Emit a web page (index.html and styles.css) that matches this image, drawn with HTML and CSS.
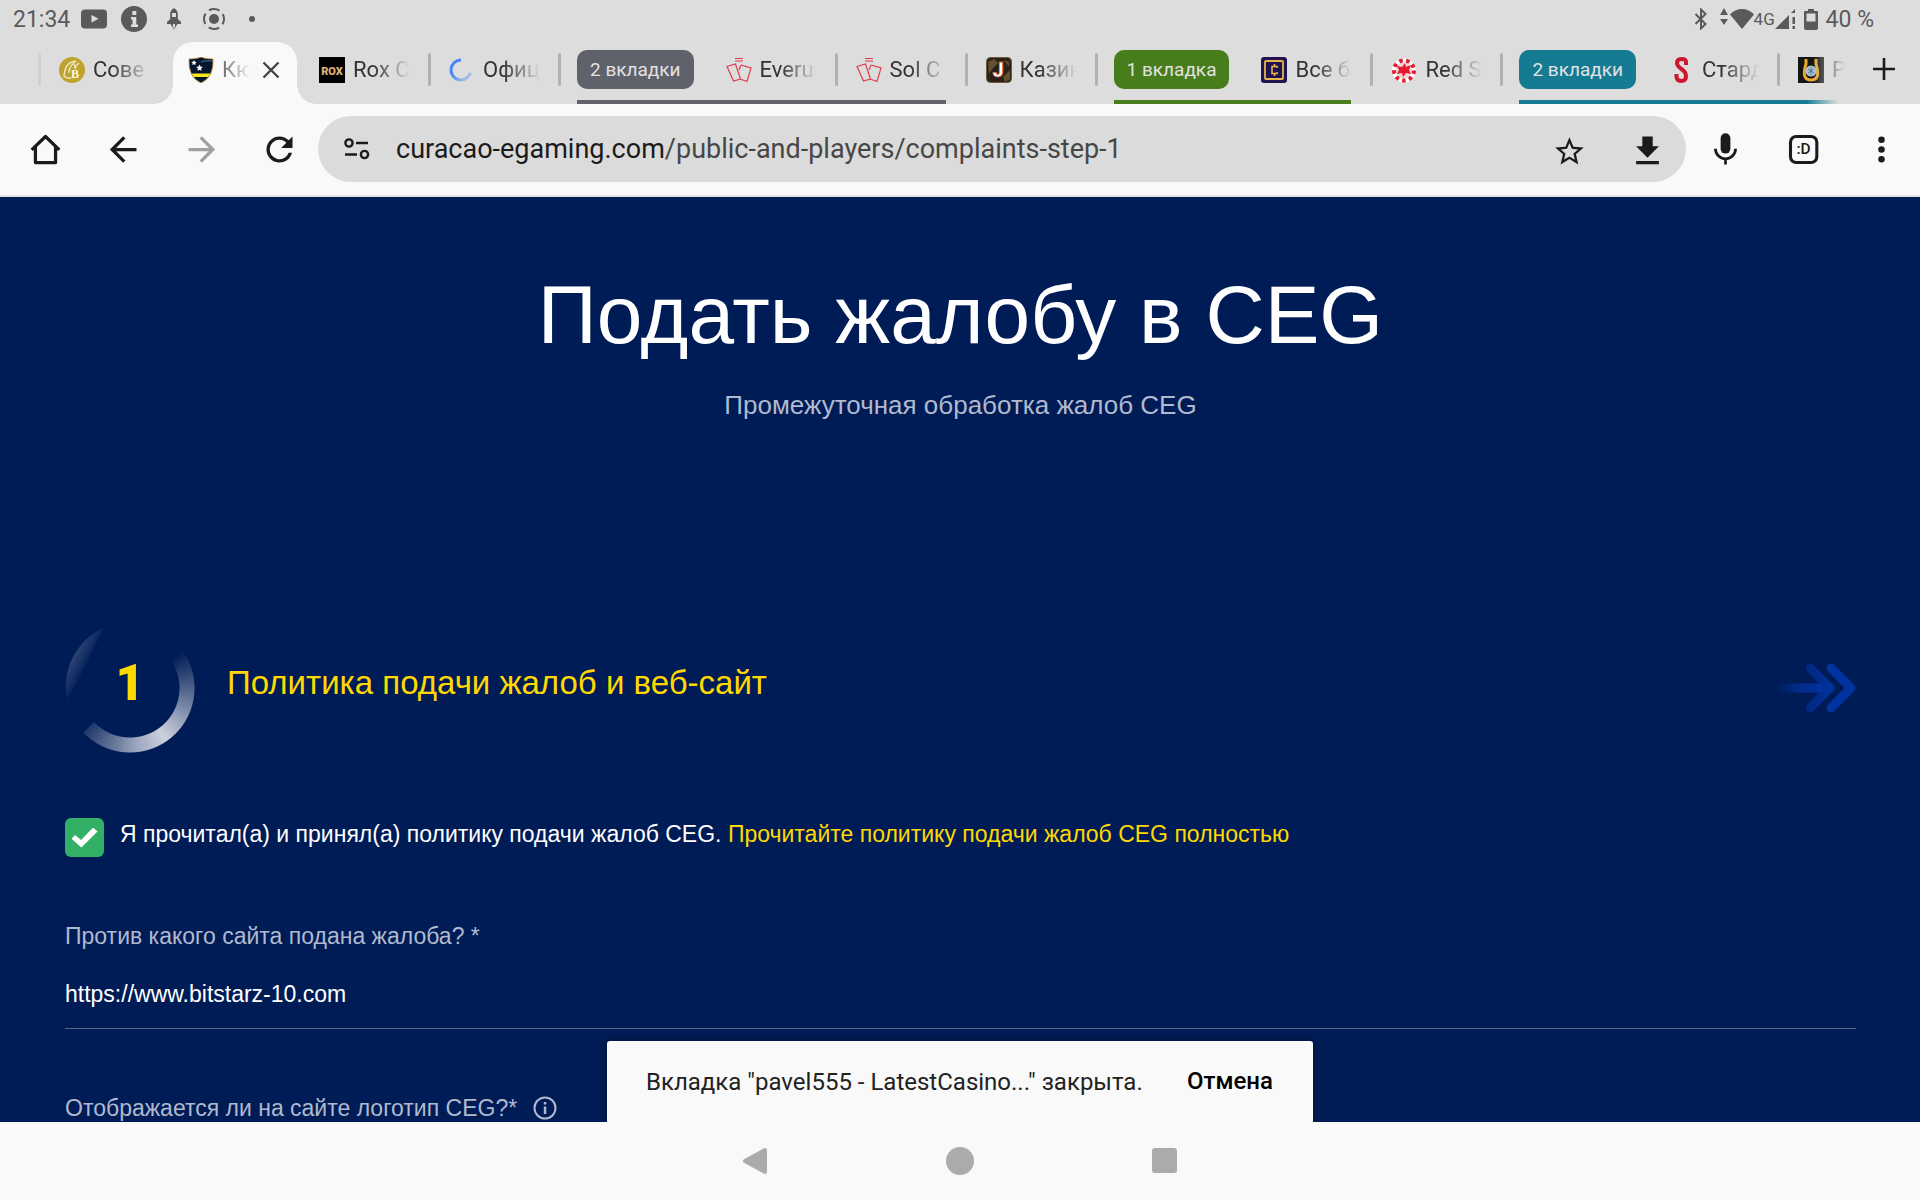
FILE: index.html
```html
<!DOCTYPE html>
<html lang="ru">
<head>
<meta charset="utf-8">
<meta name="viewport" content="width=device-width, initial-scale=1">
<title>Подать жалобу в CEG</title>
<link rel="stylesheet" href="styles.css">
</head>
<body>
<header class="status">
  <div class="status-left">
    <time class="clock">21:34</time>
    <svg class="s-youtube" width="26" height="20" viewBox="0 0 26 20"><rect width="26" height="19" y="0.5" rx="4" fill="#5a5a5a"/><path d="M10.500 6v7.500l7-3.750z" fill="#ddd"/></svg>
    <svg class="s-info" width="26" height="26" viewBox="0 0 26 26"><circle cx="13" cy="13" r="13" fill="#5a5a5a"/><path d="M11.300 5h4v4h-4zM10 11h5.300v7.500H17V21h-7v-2.500h1.500v-5H10z" fill="#ddd"/></svg>
    <svg class="s-rocket" width="14" height="22" viewBox="0 0 14 22"><path fill-rule="evenodd" d="M7 0c3 2 3.800 4 3.800 6v5l3.200 3v2h-3.500l-3.500 5.500L3.500 16H0v-2l3.200-3V6c0-2 .8-4 3.800-6zM5 5v4h4V5zM6 16v3l1 1.500L8 19v-3z" fill="#5a5a5a"/></svg>
    <svg class="s-record" width="24" height="24" viewBox="0 0 24 24"><circle cx="12" cy="12" r="5" fill="#5a5a5a"/><circle cx="12" cy="12" r="10" fill="none" stroke="#5a5a5a" stroke-width="2" stroke-dasharray="11 4.700" stroke-dashoffset="5.500"/></svg>
    <svg width="6" height="6" viewBox="0 0 6 6"><circle cx="3" cy="3" r="3" fill="#5a5a5a"/></svg>
  </div>
  <div class="status-right">
    <svg class="s-bt" width="14" height="22" viewBox="0 0 14 22"><path d="M1.500 6l10 10L7 20.500v-19L11.500 6l-10 10" fill="none" stroke="#5a5a5a" stroke-width="2"/></svg>
    <svg class="s-data" width="8" height="18" viewBox="0 0 8 18"><path d="M4 0l4 7H0zM4 17l4-6H0z" fill="#5a5a5a"/></svg>
    <svg width="24" height="20" viewBox="0 0 24 20"><path d="M12 20L0 5.500Q5 0 12 0t12 5.500z" fill="#5a5a5a"/></svg>
    <span class="net">4G</span>
    <svg class="s-signal" width="20" height="20" viewBox="0 0 20 20"><path d="M0 20L14 6v14zM16 4l4-4v4zM17.500 8h2.500v7h-2.500zM17.500 17h2.500v3h-2.500z" fill="#5a5a5a"/></svg>
    <svg class="s-battery" width="14" height="22" viewBox="0 0 14 22"><path fill-rule="evenodd" d="M4 1h6v2h3q1 0 1 1v16q0 2-2 2H2q-2 0-2-2V4q0-1 1-1h3zM2.500 5.500v8h9v-8z" fill="#5a5a5a"/></svg>
    <span class="clock">40 %</span>
  </div>
</header>

<nav class="tabs" aria-label="Вкладки">
  <button class="tab tab-first">
    <svg class="fav" viewBox="0 0 26 26"><circle cx="13" cy="13" r="13" fill="#bfa32f"/><path d="M17 4Q6 5 5 19q3 3 7 2M17 4q-7 5-7 12M15 7l2 5M20 6l-5 5" fill="none" stroke="#efe5bb" stroke-width="1.500"/><text x="12" y="21" font-family="Liberation Serif, serif" font-size="12" font-weight="700" fill="#fff8dd">B</text></svg>
    <span class="tab-title">Сове</span>
  </button>
  <div class="tab tab-active">
    <svg class="fav" viewBox="0 0 26 26"><clipPath id="shield"><path d="M1 2q8 0 12-2 4 2 12 2 1 18-12 24Q0 20 1 2z"/></clipPath><g clip-path="url(#shield)"><rect width="26" height="26" fill="#07162f"/><path d="M0 16.500h26v3.500H0z" fill="#f6e61c"/><path d="M13 5q5-2 12-1" stroke="#34527e" stroke-width="1.500" fill="none"/></g><path d="M1 2q8 0 12-2 4 2 12 2 1 18-12 24Q0 20 1 2z" fill="none" stroke="#b58a2c" stroke-width=".8"/><path d="M6 3l.8 1.700 1.900.2-1.400 1.300.4 1.900L6 7.200l-1.700.9.400-1.900-1.400-1.300 1.900-.2zM11.500 7.500l1 2.100 2.300.3-1.700 1.600.4 2.300-2-1.100-2 1.100.4-2.300-1.700-1.600 2.300-.3z" fill="#fff"/></svg>
    <span class="tab-title">Кюр</span>
    <button class="close" aria-label="Закрыть вкладку"><svg width="18" height="18" viewBox="0 0 18 18"><path d="M1.500 1.500l15 15M16.500 1.500l-15 15" stroke="#444" stroke-width="2.400"/></svg></button>
  </div>
  <button class="tab tab-plain">
    <svg class="fav" viewBox="0 0 26 26"><rect width="26" height="26" fill="#000"/><text x="13" y="18" text-anchor="middle" font-family="Roboto, sans-serif" font-size="11" font-weight="900" fill="#dcb078">ROX</text></svg>
    <span class="tab-title">Rox C</span>
  </button>
  <button class="tab">
    <svg class="fav" viewBox="0 0 26 26"><defs><linearGradient id="spin" x1="0" y1="0" x2="1" y2="1"><stop offset=".4" stop-color="#4a86f5"/><stop offset="1" stop-color="#4a86f5" stop-opacity=".2"/></linearGradient></defs><path d="M12 3A10 10 0 1 0 21.500 16" fill="none" stroke="url(#spin)" stroke-width="3"/></svg>
    <span class="tab-title">Офиц</span>
  </button>
  <div class="group group-grey">
    <div class="group-head"><button class="chip">2 вкладки</button></div>
    <button class="tab tab-plain">
      <svg class="fav" viewBox="0 0 26 26"><g id="cards" fill="none" stroke="#e2394f" stroke-width="1.200"><path d="M9 1.500h8M9 4h8M1 9.500l8.500-2.500 5 15-7 2zM15 8l10 3-4 13.500-7-2.500M15 8l-2 5"/></g></svg>
      <span class="tab-title">Everu</span>
    </button>
    <button class="tab">
      <svg class="fav" viewBox="0 0 26 26"><use href="#cards"/></svg>
      <span class="tab-title">Sol C</span>
    </button>
  </div>
  <button class="tab">
    <svg class="fav" viewBox="0 0 26 26"><rect x=".5" y=".5" width="25" height="25" rx="4" fill="#2c2118" stroke="#6f5838"/><path d="M2 5l6-3 4 4-5 5-4 6zM17 20l7-7v9l-5 3zM18 3l5 2v5z" fill="#65512e"/><text x="12" y="20" text-anchor="middle" font-family="Roboto, sans-serif" font-size="20" font-weight="900" fill="#fff" stroke="#d4552a" stroke-width=".8">J</text></svg>
    <span class="tab-title">Казин</span>
  </button>
  <div class="group group-green">
    <div class="group-head"><button class="chip">1 вкладка</button></div>
    <button class="tab tab-plain">
      <svg class="fav" viewBox="0 0 26 26"><rect width="26" height="26" rx="3" fill="#1f1350"/><rect x="4" y="4" width="18" height="18" rx="1" fill="none" stroke="#e8b64c" stroke-width="1.800"/><path d="M16 11V9.500h-5v7h5V15M13.500 7v2.500M13.500 16.500V19" fill="none" stroke="#e8b64c" stroke-width="1.600"/></svg>
      <span class="tab-title">Все б</span>
    </button>
  </div>
  <button class="tab">
    <svg class="fav" viewBox="0 0 26 26"><circle cx="13" cy="13.500" r="10" fill="none" stroke="#fff" stroke-width="4"/><circle cx="13" cy="13.500" r="10" fill="none" stroke="#e41b2c" stroke-width="4" stroke-dasharray="3.500 3.500"/><circle cx="13" cy="13.500" r="7.500" fill="#f3d3d5"/><path d="M14 6l1 4 5-2-2 5 2 4-5-1-3 4-1-4-5 1 2-4-2-4 5 1z" fill="#e41b2c"/></svg>
    <span class="tab-title">Red S</span>
  </button>
  <div class="group group-teal">
    <div class="group-head"><button class="chip">2 вкладки</button></div>
    <button class="tab tab-plain">
      <svg class="fav" viewBox="0 0 26 26"><path d="M18 8V5q0-3-4.500-3T9 6q0 3 4.500 6T18 19q0 5-4.500 5T8.500 20v-3" fill="none" stroke="#cf1630" stroke-width="4"/></svg>
      <span class="tab-title">Стард</span>
    </button>
    <button class="tab tab-last">
      <svg class="fav" viewBox="0 0 26 26"><rect width="26" height="26" fill="#151515"/><path d="M8 2v5q-5 16 5 16t5-16V2" fill="none" stroke="#e9aa2d" stroke-width="3"/><circle cx="13" cy="14" r="5.500" fill="#a9c0d2"/><path d="M10 12l6 4M16 12l-6 4M13 10v8" stroke="#547a98"/></svg>
      <span class="tab-title">Pl</span>
    </button>
  </div>
  <button class="new-tab" aria-label="Новая вкладка"><svg width="24" height="24" viewBox="0 0 24 24"><path d="M12 1v22M1 12h22" stroke="#1b1b1b" stroke-width="2.600"/></svg></button>
</nav>

<div class="toolbar">
  <button class="tool" aria-label="Домой"><svg class="icon" viewBox="0 0 24 24"><path d="M3.500 12.200L12 4l8.500 8.200M5.800 10.500V20h12.400v-9.500" fill="none" stroke="#1b1b1b" stroke-width="2" stroke-linejoin="round"/></svg></button>
  <button class="tool" aria-label="Назад"><svg class="icon" viewBox="0 0 24 24"><path d="M20 12H5M12.500 4.500L5 12l7.500 7.500" fill="none" stroke="#1b1b1b" stroke-width="2"/></svg></button>
  <button class="tool" aria-label="Вперёд"><svg class="icon" viewBox="0 0 24 24"><path d="M4 12h15M11.500 4.500L19 12l-7.500 7.500" fill="none" stroke="#a0a0a0" stroke-width="2"/></svg></button>
  <button class="tool" aria-label="Обновить"><svg class="icon" viewBox="0 0 24 24"><path d="M17.650 6.350A7.960 7.960 0 0 0 12 4a8 8 0 1 0 7.730 10h-2.080A6 6 0 1 1 12 6c1.660 0 3.140.69 4.220 1.780L13 11h7V4z" fill="#1b1b1b"/></svg></button>
  <div class="omnibox">
    <button class="site" aria-label="Сведения о сайте"><svg width="26" height="22" viewBox="0 0 26 22"><g fill="none" stroke="#1b1b1b" stroke-width="2.400"><circle cx="5" cy="5" r="3.600"/><circle cx="20.500" cy="16.500" r="3.600"/><path d="M12 5h12M1 16.500h12"/></g></svg></button>
    <div class="url"><span class="host">curacao-egaming.com</span>/public-and-players/complaints-step-1</div>
    <button class="tool" aria-label="В закладки"><svg class="icon" viewBox="0 0 24 24"><path d="M22 10.240l-7.190-.62L12 3 9.190 9.630 2 10.240l5.460 4.730L5.820 22 12 18.270 18.180 22l-1.630-7.030zM12 16.400l-3.760 2.270 1-4.280-3.320-2.880 4.380-.38L12 7.100l1.710 4.040 4.380.38-3.320 2.880 1 4.280z" fill="#1b1b1b" transform="translate(1.400 1.800) scale(.88)"/></svg></button>
    <button class="tool" aria-label="Скачать"><svg class="icon" viewBox="0 0 24 24"><path d="M19 10h-3.800V4H8.800v6H5l7 7zM5 19v2h14v-2z" fill="#1b1b1b"/></svg></button>
  </div>
  <button class="tool" aria-label="Голосовой поиск"><svg class="icon" viewBox="0 0 24 24"><rect x="9" y="2" width="6" height="12.500" rx="3" fill="#1b1b1b"/><path d="M5.800 11.500a6.200 6.200 0 0 0 12.400 0M12 17.500V21.300" fill="none" stroke="#1b1b1b" stroke-width="1.700"/></svg></button>
  <button class="tool" aria-label="Переключить вкладки"><svg class="icon" viewBox="0 0 24 24"><rect x="4" y="4" width="16.200" height="16" rx="3.500" fill="none" stroke="#1b1b1b" stroke-width="1.900"/><text x="12" y="14.500" text-anchor="middle" font-family="Roboto, sans-serif" font-size="9.500" font-weight="500" fill="#1b1b1b">:D</text></svg></button>
  <button class="tool" aria-label="Меню"><svg class="icon" viewBox="0 0 24 24"><g fill="#1b1b1b"><circle cx="12" cy="6" r="2"/><circle cx="12" cy="12" r="2"/><circle cx="12" cy="18" r="2"/></g></svg></button>
</div>

<main class="page">
  <h1 class="title">Подать жалобу в CEG</h1>
  <p class="subtitle">Промежуточная обработка жалоб CEG</p>
  <form class="form">
    <div class="step">
      <div class="ring">
        <svg class="ring-art" viewBox="0 0 130 130">
          <defs>
            <linearGradient id="crescent" gradientUnits="userSpaceOnUse" x1="8" y1="28" x2="27" y2="38"><stop offset="0" stop-color="#fff" stop-opacity=".2"/><stop offset="1" stop-color="#fff" stop-opacity="0"/></linearGradient>
          </defs>
          <path d="M38 5A65 65 0 0 0 2 76Q18 50 38 5z" fill="url(#crescent)"/>
        </svg>
        <span class="ring-num">1</span>
      </div>
      <h2 class="step-title">Политика подачи жалоб и веб-сайт</h2>
      <svg class="step-arrow" width="80" height="50" viewBox="0 0 80 50"><defs><linearGradient id="arr" gradientUnits="userSpaceOnUse" x1="0" y1="0" x2="58" y2="0"><stop offset="0" stop-color="#0032a0" stop-opacity="0"/><stop offset="1" stop-color="#0032a0"/></linearGradient></defs><g fill="none" stroke-width="9" stroke-linecap="round" stroke-linejoin="round"><path d="M0 25h50" stroke="url(#arr)" stroke-linecap="butt"/><path d="M0 20.500h46v9H0z" stroke="none" fill="url(#arr)"/><path d="M34 5l20 20-20 20" stroke="url(#arr)"/><path d="M55 5l20 20-20 20" stroke="#0032a0"/></g></svg>
    </div>
    <div class="agree">
      <input class="agree-box" type="checkbox" id="agree" checked>
      <p class="agree-text"><label for="agree">Я прочитал(а) и принял(а) политику подачи жалоб CEG.</label> <a class="link" href="#policy">Прочитайте политику подачи жалоб CEG полностью</a></p>
    </div>
    <div class="field">
      <label class="label" for="site">Против какого сайта подана жалоба? *</label>
      <input class="input" type="text" id="site" value="https://www.bitstarz-10.com">
    </div>
    <div class="question">
      <span class="label">Отображается ли на сайте логотип CEG?*</span>
      <svg width="24" height="24" viewBox="0 0 24 24"><circle cx="12" cy="12" r="10.500" fill="none" stroke="#b0b9cd" stroke-width="2"/><path d="M10.800 6h2.500v2.500h-2.500zM10.800 10.500h2.500V18h-2.500z" fill="#b0b9cd"/></svg>
    </div>
  </form>
  <div class="snackbar" role="status">
    <span class="snack-text">Вкладка "pavel555 - LatestCasino..." закрыта.</span>
    <button class="undo">Отмена</button>
  </div>
</main>

<footer class="sysnav">
  <button class="sys" aria-label="Назад"><svg width="28" height="28" viewBox="0 0 28 28"><path d="M24 3v22L4 14z" fill="#ababab" stroke="#ababab" stroke-width="4" stroke-linejoin="round"/></svg></button>
  <button class="sys" aria-label="Главный экран"><svg width="28" height="28" viewBox="0 0 28 28"><circle cx="14" cy="14" r="14" fill="#ababab"/></svg></button>
  <button class="sys" aria-label="Недавние"><svg width="28" height="28" viewBox="0 0 28 28"><rect x="1" y="1" width="25" height="25" rx="3" fill="#ababab"/></svg></button>
</footer>
</body>
</html>
```
FILE: styles.css
```css
* { box-sizing: border-box; }

body {
  margin: 0;
  height: 100vh;
  display: flex;
  flex-direction: column;
  overflow: hidden;
  background: #f9f9f9;
  font-family: Roboto, sans-serif;
}

button {
  margin: 0;
  padding: 0;
  border: 0;
  background: none;
  font: inherit;
  color: inherit;
}

svg { display: block; flex: none; }

h1, h2, p { margin: 0; font-weight: 400; }

/* Status bar */
.status {
  flex: none;
  display: flex;
  justify-content: space-between;
  height: 42px;
  padding: 0 46px 4px 13px;
  background: #ddd;
  color: #5a5a5a;
}
.status-left, .status-right { display: flex; align-items: center; }
.clock { font-size: 23px; line-height: 28px; padding-top: 2px; }
.s-youtube { margin-left: 11px; }
.s-info { margin-left: 14px; }
.s-rocket { margin-left: 20px; }
.s-record { margin: 0 23px 0 21px; }
.s-data { margin: 0 2px 4px 12px; }
.net { font-size: 17px; width: 21px; }
.s-signal { margin-right: 9px; }
.s-battery { margin-right: 8px; }

/* Tab strip */
.tabs {
  flex: none;
  display: flex;
  height: 62px;
  padding-left: 38px;
  background: #ddd;
  color: #333;
}
.tab {
  position: relative;
  flex: none;
  display: flex;
  align-items: center;
  width: 130px;
  padding: 0 0 6px 21px;
  text-align: left;
}
.tab::before, .group-head::before {
  content: "";
  position: absolute;
  left: 0;
  top: 11px;
  width: 3px;
  height: 33px;
  border-radius: 2px;
  background: #b1b1b1;
}
.tab-first::before { background: #d0d0d0; }
.tab-plain::before { display: none; }
.fav { width: 26px; height: 26px; }
.tab-title {
  width: 57px;
  margin-left: 8px;
  overflow: hidden;
  white-space: nowrap;
  font-size: 22px;
  line-height: 28px;
  -webkit-mask-image: linear-gradient(90deg, #000 35%, transparent);
  mask-image: linear-gradient(90deg, #000 35%, transparent);
}
.tab-active {
  width: 124px;
  margin: 0 1px 0 5px;
  padding-left: 15px;
  border-radius: 20px 20px 0 0;
  background: #f9f9f9;
}
.tab-active::before, .tab-active::after {
  content: "";
  position: absolute;
  top: auto;
  bottom: 0;
  width: 20px;
  height: 20px;
  border-radius: 0;
}
.tab-active::before {
  left: -20px;
  background: radial-gradient(circle at 0 0, transparent 20px, #f9f9f9 20px);
}
.tab-active::after {
  right: -20px;
  background: radial-gradient(circle at 100% 0, transparent 20px, #f9f9f9 20px);
}
.tab-active .tab-title {
  width: 29px;
  -webkit-mask-image: linear-gradient(90deg, rgba(0, 0, 0, .7), transparent);
  mask-image: linear-gradient(90deg, rgba(0, 0, 0, .7), transparent);
}
.close { margin-left: 11px; }

.group { position: relative; flex: none; display: flex; }
.group::after {
  content: "";
  position: absolute;
  left: 19px;
  right: 19px;
  bottom: 0;
  height: 4px;
  background: var(--group);
}
.group-grey { --group: #5f626b; }
.group-green { --group: #477d1b; }
.group-teal { --group: #157b92; }
.group-teal::after {
  right: 10px;
  background: linear-gradient(90deg, var(--group) 90%, transparent);
}
.group-head { position: relative; padding: 8px 11px 0 19px; }
.chip {
  height: 39px;
  padding: 0 13px;
  border-radius: 10px;
  background: var(--group);
  color: #e2e2e2;
  font-size: 19px;
}
.tab-last {
  width: 71px;
  overflow: hidden;
  -webkit-mask-image: linear-gradient(90deg, #000 50%, transparent);
  mask-image: linear-gradient(90deg, #000 50%, transparent);
}
.new-tab {
  flex: 1;
  display: flex;
  justify-content: center;
  align-items: center;
  padding-bottom: 8px;
}

/* Browser toolbar */
.toolbar {
  flex: none;
  display: flex;
  align-items: center;
  height: 93px;
  padding: 0 0 1px 6px;
  border-bottom: 2px solid #e2e2e2;
  background: #f9f9f9;
}
.tool {
  flex: none;
  display: flex;
  justify-content: center;
  width: 78px;
}
.icon { width: 39px; height: 39px; }
.omnibox {
  flex: 1;
  min-width: 0;
  display: flex;
  align-items: center;
  height: 66px;
  padding-left: 26px;
  border-radius: 33px;
  background: #dbdbdb;
}
.url {
  flex: 1;
  min-width: 0;
  margin-left: 26px;
  overflow: hidden;
  white-space: nowrap;
  font-size: 27px;
  line-height: 36px;
  color: #474747;
}
.host { color: #1b1b1b; }

/* Complaint page */
.page {
  position: relative;
  flex: 1;
  min-height: 0;
  overflow: hidden;
  padding: 70px 64px 0 65px;
  background: #001c57;
  color: #fff;
  font-family: "Liberation Sans", Arial, sans-serif;
  font-size: 23px;
  line-height: 32px;
}
.title { font-size: 82px; line-height: 96px; text-align: center; }
.subtitle {
  margin-top: 26px;
  font-size: 26px;
  text-align: center;
  color: #b0b9cd;
}
.form { margin-top: 202px; }
.step { display: flex; align-items: center; }
.ring {
  position: relative;
  flex: none;
  display: flex;
  justify-content: center;
  align-items: center;
  width: 130px;
  height: 130px;
  padding-bottom: 10px;
}
.ring::before {
  content: "";
  position: absolute;
  inset: 0;
  background: conic-gradient(transparent 55deg, rgba(255, 255, 255, .35) 95deg, rgba(255, 255, 255, .8) 145deg, rgba(255, 255, 255, .6) 175deg, rgba(255, 255, 255, .12) 226deg, transparent 227deg);
  -webkit-mask-image: radial-gradient(circle, transparent 49px, #000 50px, #000 64px, transparent 65px);
  mask-image: radial-gradient(circle, transparent 49px, #000 50px, #000 64px, transparent 65px);
}
.ring-art { position: absolute; inset: 0; }
.ring-num {
  font-family: Roboto, sans-serif;
  font-size: 50px;
  line-height: 50px;
  font-weight: 900;
  color: #ffd800;
}
.step-title {
  flex: 1;
  margin-left: 32px;
  padding-bottom: 10px;
  font-size: 33px;
  line-height: 40px;
  color: #ffd800;
}
.agree {
  display: flex;
  gap: 16px;
  margin-top: 65px;
}
.agree-box {
  flex: none;
  appearance: none;
  width: 39px;
  height: 39px;
  margin: 0;
  border-radius: 6px;
  background: #32b166;
  display: grid;
  place-items: center;
}
.agree-box:checked::before {
  content: "";
  width: 26px;
  height: 20px;
  background: #fff;
  clip-path: polygon(0 56%, 14% 38%, 37% 62%, 83% 0, 100% 20%, 38% 100%);
}
.link { color: #ffd800; text-decoration: none; }
.field {
  display: flex;
  flex-direction: column;
  margin-top: 63px;
}
.label { color: #b0b9cd; }
.input {
  margin-top: 18px;
  padding: 8px 0 18px;
  border: 0;
  border-bottom: 1px solid #5a6891;
  border-radius: 0;
  background: none;
  color: #fff;
  font: inherit;
  outline: none;
}
.question {
  display: flex;
  align-items: center;
  gap: 16px;
  margin-top: 63px;
}

.snackbar {
  position: absolute;
  left: 50%;
  bottom: 0;
  transform: translateX(-50%);
  display: flex;
  align-items: center;
  justify-content: space-between;
  width: 706px;
  height: 81px;
  padding: 0 40px 0 39px;
  border-radius: 3px 3px 0 0;
  background: #f9f9f9;
  box-shadow: 0 0 12px rgba(0, 0, 0, .4);
  color: #222;
  font-family: Roboto, sans-serif;
  font-size: 24px;
}
.undo { font-weight: 500; color: #000; padding-bottom: 2px; }

/* System navigation */
.sysnav {
  flex: none;
  display: flex;
  justify-content: center;
  height: 78px;
}
.sys {
  display: flex;
  justify-content: center;
  align-items: center;
  width: 205px;
}
```
